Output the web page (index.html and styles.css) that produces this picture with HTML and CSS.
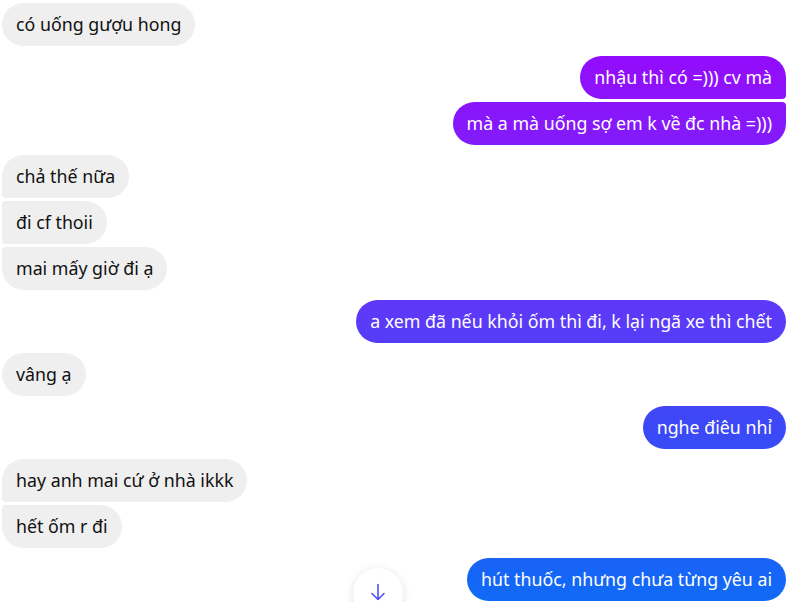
FILE: index.html
```html
<!DOCTYPE html>
<html lang="vi">
<head>
<meta charset="utf-8">
<link rel="stylesheet" href="styles.css">
</head>
<body>
<div class="chat">
  <div class="group in">
    <div class="msg single">có uống gượu hong</div>
  </div>
  <div class="group out">
    <div class="msg first">nhậu thì có =))) cv mà</div>
    <div class="msg last">mà a mà uống sợ em k về đc nhà =)))</div>
  </div>
  <div class="group in">
    <div class="msg first">chả thế nữa</div>
    <div class="msg mid">đi cf thoii</div>
    <div class="msg last">mai mấy giờ đi ạ</div>
  </div>
  <div class="group out">
    <div class="msg single">a xem đã nếu khỏi ốm thì đi, k lại ngã xe thì chết</div>
  </div>
  <div class="group in">
    <div class="msg single">vâng ạ</div>
  </div>
  <div class="group out">
    <div class="msg single">nghe điêu nhỉ</div>
  </div>
  <div class="group in">
    <div class="msg first">hay anh mai cứ ở nhà ikkk</div>
    <div class="msg last">hết ốm r đi</div>
  </div>
  <div class="group out">
    <div class="msg single">hút thuốc, nhưng chưa từng yêu ai</div>
  </div>
</div>
<button class="scroll-down" aria-label="Cuộn xuống">
  <svg width="20" height="20" viewBox="0 0 20 20" fill="none" stroke="#4f4ff6" stroke-width="1.6" stroke-linecap="round" stroke-linejoin="round">
    <path d="M10 2.5V17.5M4 11.5L10 17.5L16 11.5"/>
  </svg>
</button>
</body>
</html>
```
FILE: styles.css
```css
html, body {
  margin: 0;
  padding: 0;
  background: #fff;
  overflow: hidden;
}
body {
  width: 792px;
  height: 602px;
  font-family: "Segoe UI", "Noto Sans", sans-serif;
  position: relative;
}
.chat {
  display: flex;
  flex-direction: column;
  gap: 10px;
  padding: 3px 6px 0 2px;
}
.group {
  display: flex;
  flex-direction: column;
  gap: 3px;
}
.group.in { align-items: flex-start; }
.group.out { align-items: flex-end; }
.msg {
  font-size: 17.8px;
  line-height: 23px;
  padding: 10px 14px;
  border-radius: 22px;
  white-space: nowrap;
}
.in .msg {
  background: #efefef;
  color: #111;
}
.out .msg {
  color: #fff;
  background-image: linear-gradient(to bottom, #9a00ff 0%, #9010fb 13%, #7a22fa 30%, #5b3af8 53%, #3c48f7 71%, #2a56f6 82%, #1566f6 96%, #0f6bf6 100%);
  background-attachment: fixed;
}
.in .msg.first { border-bottom-left-radius: 4px; }
.in .msg.mid { border-top-left-radius: 4px; border-bottom-left-radius: 4px; }
.in .msg.last { border-top-left-radius: 4px; }
.out .msg.first { border-bottom-right-radius: 4px; }
.out .msg.mid { border-top-right-radius: 4px; border-bottom-right-radius: 4px; }
.out .msg.last { border-top-right-radius: 4px; }
.scroll-down {
  position: absolute;
  left: 353px;
  top: 568px;
  width: 50px;
  height: 50px;
  border-radius: 50%;
  border: none;
  background: #fff;
  box-shadow: 0 2px 10px rgba(0,0,0,0.12);
  display: flex;
  align-items: flex-start;
  justify-content: center;
  padding: 14px 0 0;
}
```
